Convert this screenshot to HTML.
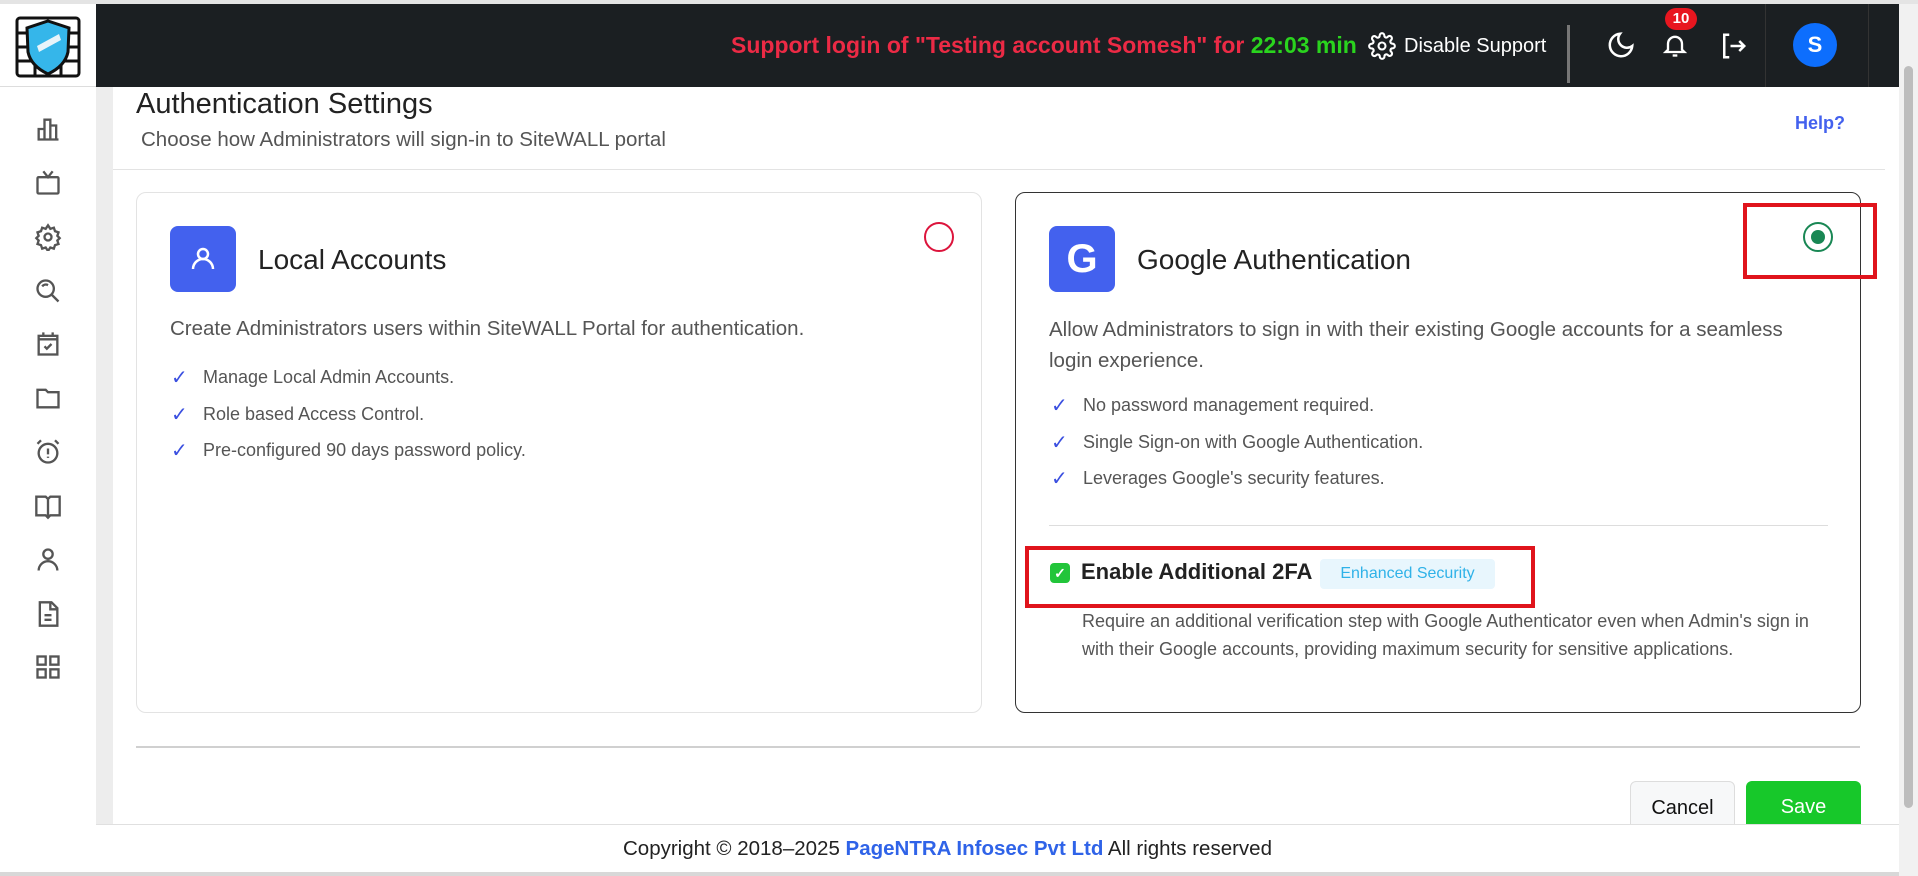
<!DOCTYPE html>
<html><head><meta charset="utf-8"><style>
*{box-sizing:border-box;margin:0;padding:0}
body{width:1918px;height:876px;overflow:hidden;background:#fff;font-family:"Liberation Sans",sans-serif;position:relative;color:#222}
.abs{position:absolute}
.topline{left:0;top:0;width:1918px;height:4px;background:#e4e4e4}
.header{left:96px;top:4px;width:1804px;height:83px;background:#1b1f22}
.logo{left:0;top:4px;width:96px;height:83px;background:#fff;border-bottom:1px solid #ddd}
.side{left:0;top:87px;width:96px;height:789px;background:#fff}
.strip{left:96px;top:87px;width:17px;height:737px;background:#ededed}
.content{left:113px;top:87px;width:1772px;height:737px;background:#fff}
.sb{left:1899px;top:4px;width:19px;height:872px;background:#f1f1f1}
.thumb{left:1904px;top:66px;width:9px;height:742px;background:#bdbdbd;border-radius:5px}
.card{border:1px solid #e3e3e3;border-radius:10px;background:#fff}
.ibox{width:66px;height:66px;border-radius:8px;background:#4361ee}
.ct{font-size:28px;color:#222}
.desc{color:#555;font-size:20.5px}
.li{font-size:18px;color:#555;white-space:nowrap}
.li span{color:#3a4fe0;font-size:20px;position:absolute;left:-32px;top:-2px}
.redbox{border:4px solid #e0141c}
.side svg{position:absolute;left:34px}
</style></head><body>
<div class="abs topline"></div>
<div class="abs logo">
<svg width="66" height="62" viewBox="0 0 66 62" style="position:absolute;left:15px;top:12px">
<g fill="none" stroke="#111" stroke-width="3">
<rect x="2" y="2" width="62" height="58" rx="3"/>
<line x1="2" y1="17" x2="64" y2="17"/><line x1="2" y1="31" x2="64" y2="31"/><line x1="2" y1="45" x2="64" y2="45"/>
<line x1="20" y1="45" x2="20" y2="60"/><line x1="46" y1="45" x2="46" y2="60"/>
</g>
<path d="M33 5 L54 12 L53 36 Q50 50 33 58 Q16 50 13 36 L12 12 Z" fill="#35b6ea" stroke="#111" stroke-width="3"/>
<path d="M22 30 L44 18 L46 24 L24 36 Z" fill="#e8f4fa"/>
</svg></div>
<div class="abs header">
<div class="abs" style="left:635px;top:28px;font-size:23px;font-weight:bold;color:#ec2a45;white-space:nowrap">Support login of "Testing account Somesh" for <span style="color:#2ad41e">22:03 min</span></div>
<svg class="abs" style="left:1272px;top:28px" width="28" height="28" viewBox="0 0 24 24" fill="none" stroke="#fff" stroke-width="1.8"><circle cx="12" cy="12" r="3"/><path d="M19.4 15a1.7 1.7 0 0 0 .3 1.8l.1.1a2 2 0 1 1-2.8 2.8l-.1-.1a1.7 1.7 0 0 0-1.8-.3 1.7 1.7 0 0 0-1 1.5V21a2 2 0 1 1-4 0v-.1a1.7 1.7 0 0 0-1.1-1.5 1.7 1.7 0 0 0-1.8.3l-.1.1a2 2 0 1 1-2.8-2.8l.1-.1a1.7 1.7 0 0 0 .3-1.8 1.7 1.7 0 0 0-1.5-1H3a2 2 0 1 1 0-4h.1a1.7 1.7 0 0 0 1.5-1.1 1.7 1.7 0 0 0-.3-1.8l-.1-.1a2 2 0 1 1 2.8-2.8l.1.1a1.7 1.7 0 0 0 1.8.3H9a1.7 1.7 0 0 0 1-1.5V3a2 2 0 1 1 4 0v.1a1.7 1.7 0 0 0 1 1.5 1.7 1.7 0 0 0 1.8-.3l.1-.1a2 2 0 1 1 2.8 2.8l-.1.1a1.7 1.7 0 0 0-.3 1.8V9a1.7 1.7 0 0 0 1.5 1H21a2 2 0 1 1 0 4h-.1a1.7 1.7 0 0 0-1.5 1z"/></svg>
<div class="abs" style="left:1308px;top:31px;font-size:20px;color:#fff;white-space:nowrap">Disable Support</div>
<div class="abs" style="left:1471px;top:21px;width:3px;height:58px;background:#777"></div>
<svg class="abs" style="left:1510px;top:26px" width="30" height="30" viewBox="0 0 24 24" fill="none" stroke="#fff" stroke-width="2"><path d="M21 12.8A9 9 0 1 1 11.2 3a7 7 0 0 0 9.8 9.8z"/></svg>
<svg class="abs" style="left:1565px;top:26px" width="28" height="30" viewBox="0 0 24 24" fill="none" stroke="#fff" stroke-width="2"><path d="M18 16V11a6 6 0 0 0-12 0v5l-2 2h16z"/><path d="M10 21h4"/></svg>
<div class="abs" style="left:1569px;top:4px;width:32px;height:22px;border-radius:11px;background:#e8161f;color:#fff;font-size:15px;font-weight:bold;text-align:center;line-height:22px">10</div>
<svg class="abs" style="left:1622px;top:27px" width="30" height="30" viewBox="0 0 24 24" fill="none" stroke="#fff" stroke-width="2"><path d="M9 3H5v18h4"/><path d="M10 12h11M17 8l4 4-4 4"/></svg>
<div class="abs" style="left:1669px;top:0;width:1px;height:83px;background:#333"></div>
<div class="abs" style="left:1697px;top:19px;width:44px;height:44px;border-radius:50%;background:#0d6efd;color:#fff;font-size:22px;font-weight:bold;text-align:center;line-height:44px">S</div>
<div class="abs" style="left:1772px;top:0;width:1px;height:83px;background:#333"></div>
</div>
<div class="abs side">
<svg style="top:28px" width="28" height="28" viewBox="0 0 24 24" fill="none" stroke="#555" stroke-width="2"><path d="M3 21h18M4 21V12h5v9M9 21V4h5v17M14 21V9h5v12"/></svg>
<svg style="top:82px" width="28" height="28" viewBox="0 0 24 24" fill="none" stroke="#555" stroke-width="2"><rect x="3" y="7" width="18" height="14" rx="1"/><path d="M8 2l4 5 4-5"/></svg>
<svg style="top:136px" width="28" height="28" viewBox="0 0 24 24" fill="none" stroke="#555" stroke-width="2"><circle cx="12" cy="12" r="3"/><path d="M12 2l2 3 3-1 1 3 3 1-1 3 2 2-2 2 1 3-3 1-1 3-3-1-2 3-2-3-3 1-1-3-3-1 1-3-2-2 2-2-1-3 3-1 1-3 3 1z"/></svg>
<svg style="top:190px" width="28" height="28" viewBox="0 0 24 24" fill="none" stroke="#555" stroke-width="2"><circle cx="10" cy="10" r="7"/><path d="M15 15l6 6M7 8a4 4 0 0 1 5-1"/></svg>
<svg style="top:243px" width="28" height="28" viewBox="0 0 24 24" fill="none" stroke="#555" stroke-width="2"><rect x="4" y="5" width="16" height="16"/><path d="M8 2v4M16 2v4M4 8h16M9 14l2 2 4-4"/></svg>
<svg style="top:297px" width="28" height="28" viewBox="0 0 24 24" fill="none" stroke="#555" stroke-width="2"><path d="M3 5h7l2 2h9v13H3z"/></svg>
<svg style="top:351px" width="28" height="28" viewBox="0 0 24 24" fill="none" stroke="#555" stroke-width="2"><circle cx="12" cy="13" r="8"/><path d="M12 9v5M12 16v1M3 5l3-3M21 5l-3-3"/></svg>
<svg style="top:405px" width="28" height="28" viewBox="0 0 24 24" fill="none" stroke="#555" stroke-width="2"><path d="M2 4h8l2 2 2-2h8v16h-8l-2 2-2-2H2zM12 6v16"/></svg>
<svg style="top:459px" width="28" height="28" viewBox="0 0 24 24" fill="none" stroke="#555" stroke-width="2"><circle cx="12" cy="7" r="4"/><path d="M4 21a8 8 0 0 1 16 0"/></svg>
<svg style="top:513px" width="28" height="28" viewBox="0 0 24 24" fill="none" stroke="#555" stroke-width="2"><path d="M5 2h10l5 5v15H5zM14 2v6h6M9 13h6M9 17h6"/></svg>
<svg style="top:566px" width="28" height="28" viewBox="0 0 24 24" fill="none" stroke="#555" stroke-width="2"><rect x="3" y="3" width="7" height="7"/><rect x="14" y="3" width="7" height="7"/><rect x="3" y="14" width="7" height="7"/><rect x="14" y="14" width="7" height="7"/></svg>
</div>
<div class="abs strip"></div>
<div class="abs content"></div>
<div class="abs" style="left:136px;top:88px;font-size:29px;color:#222">Authentication Settings</div>
<div class="abs" style="left:141px;top:128px;font-size:20.5px;color:#555">Choose how Administrators will sign-in to SiteWALL portal</div>
<div class="abs" style="left:1795px;top:113px;font-size:18px;font-weight:bold;color:#4361ee">Help?</div>
<div class="abs" style="left:113px;top:169px;width:1772px;height:1px;background:#e3e3e3"></div>

<div class="abs card" style="left:136px;top:192px;width:846px;height:521px"></div>
<div class="abs ibox" style="left:170px;top:226px"><svg width="66" height="66" viewBox="0 0 66 66" fill="none" stroke="#fff" stroke-width="2.5"><circle cx="33" cy="28" r="5"/><path d="M23 43a10 10 0 0 1 20 0"/></svg></div>
<div class="abs ct" style="left:258px;top:244px">Local Accounts</div>
<div class="abs" style="left:924px;top:222px;width:30px;height:30px;border-radius:50%;border:2px solid #dc143c"></div>
<div class="abs desc" style="left:170px;top:317px">Create Administrators users within SiteWALL Portal for authentication.</div>
<div class="abs li" style="left:203px;top:367px"><span>✓</span>Manage Local Admin Accounts.</div>
<div class="abs li" style="left:203px;top:404px"><span>✓</span>Role based Access Control.</div>
<div class="abs li" style="left:203px;top:440px"><span>✓</span>Pre-configured 90 days password policy.</div>

<div class="abs card" style="left:1015px;top:192px;width:846px;height:521px;border-color:#333"></div>
<div class="abs ibox" style="left:1049px;top:226px;color:#fff;font-size:40px;font-weight:bold;text-align:center;line-height:66px">G</div>
<div class="abs ct" style="left:1137px;top:244px">Google Authentication</div>
<div class="abs" style="left:1803px;top:222px;width:30px;height:30px;border-radius:50%;border:2px solid #198754"><div style="position:absolute;left:6px;top:6px;width:14px;height:14px;border-radius:50%;background:#198754"></div></div>
<div class="abs redbox" style="left:1743px;top:203px;width:134px;height:76px"></div>
<div class="abs desc" style="left:1049px;top:314px;line-height:31px;width:760px">Allow Administrators to sign in with their existing Google accounts for a seamless login experience.</div>
<div class="abs li" style="left:1083px;top:395px"><span>✓</span>No password management required.</div>
<div class="abs li" style="left:1083px;top:432px"><span>✓</span>Single Sign-on with Google Authentication.</div>
<div class="abs li" style="left:1083px;top:468px"><span>✓</span>Leverages Google's security features.</div>
<div class="abs" style="left:1049px;top:525px;width:779px;height:1px;background:#ddd"></div>
<div class="abs" style="left:1050px;top:563px;width:20px;height:20px;border-radius:4px;background:#22c53a;color:#fff;font-size:14px;font-weight:bold;text-align:center;line-height:20px">✓</div>
<div class="abs" style="left:1081px;top:559px;font-size:22px;font-weight:bold;color:#222">Enable Additional 2FA</div>
<div class="abs" style="left:1320px;top:559px;width:175px;height:30px;border-radius:4px;background:#e8f6fd;color:#2fb2e8;font-size:16px;text-align:center;line-height:30px">Enhanced Security</div>
<div class="abs redbox" style="left:1025px;top:546px;width:510px;height:62px"></div>
<div class="abs" style="left:1082px;top:607px;width:740px;font-size:18px;color:#555;line-height:28px">Require an additional verification step with Google Authenticator even when Admin's sign in with their Google accounts, providing maximum security for sensitive applications.</div>

<div class="abs" style="left:136px;top:746px;width:1724px;height:2px;background:#d0d0d0"></div>
<div class="abs" style="left:1630px;top:781px;width:105px;height:60px;border:1px solid #ddd;border-radius:6px;background:#f7f8f9;font-size:20px;text-align:center;padding-top:15px;color:#111">Cancel</div>
<div class="abs" style="left:1746px;top:781px;width:115px;height:60px;border-radius:6px;background:#17c82a;color:#fff;font-size:20px;text-align:center;padding-top:15px">Save</div>
<div class="abs" style="left:96px;top:824px;width:1803px;height:49px;background:#fff;border-top:1px solid #e0e0e0;text-align:center;font-size:20.5px;line-height:48px;color:#222;padding-right:100px">Copyright © 2018–2025 <b style="color:#2f63e8">PageNTRA Infosec Pvt Ltd</b> All rights reserved</div>
<div class="abs" style="left:0;top:872px;width:1918px;height:4px;background:#d8d8d8"></div>
<div class="abs sb"></div>
<div class="abs thumb"></div>
</body></html>
